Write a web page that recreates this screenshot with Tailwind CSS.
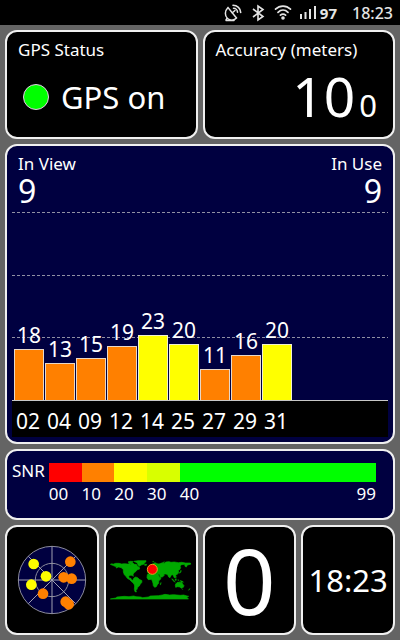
<!DOCTYPE html>
<html lang="en">
<head>
  <meta charset="UTF-8">
  <meta name="viewport" content="width=device-width, initial-scale=1.0">
  <title>GPS Status</title>
  <script src="https://cdn.jsdelivr.net/npm/@tailwindcss/browser@4"></script>
</head>
<body class="flex flex-col min-h-screen bg-[#646464] text-white font-['Noto_Sans',sans-serif]">

<!-- Status bar -->
<header class="flex items-center justify-end gap-[7px] h-[25px] px-[7px] bg-black text-[#e4e4e4]">
    <svg class="size-[18px]" viewBox="0 0 18 18" fill="none" stroke="currentColor" stroke-width="1.5" stroke-linecap="round">
        <path d="M4 3.500C0.500 7 0.700 12 3.500 14.500c2.500 2.300 6.500 2.200 9-.5z"/>
        <path d="M8.300 8.800 11 6.500M3 14.500l-1 1.500M2 16.500h8"/>
        <path d="M9.500 4.300c2.200 0 4 1.800 4 4M9 1.200c4.200 0 7.700 3.200 7.700 7.300" stroke-width="1.600"/>
    </svg>
    <svg class="size-[18px]" viewBox="0 0 18 18" fill="none" stroke="currentColor" stroke-width="1.600">
        <path d="M4 5 14 12.500 9 16V2l5 3.500L4 13"/>
    </svg>
    <svg class="size-[18px]" viewBox="0 0 18 18" fill="none" stroke="currentColor" stroke-width="1.700" stroke-linecap="round">
        <path d="M1.500 5.200C5.800 1 12.200 1 16.500 5.200M4 8.300c3-2.800 7-2.800 10 0M6.400 11.200c1.600-1.400 3.600-1.400 5.200 0"/>
        <circle cx="9" cy="14" r="1.800" fill="currentColor" stroke="none"/>
    </svg>
    <svg class="size-[18px]" viewBox="0 0 18 18" fill="currentColor">
        <path d="M1 10h2v5H1zM5.500 8h2v7h-2zM10 5h2v10h-2zM15 2h2v13h-2z"/>
    </svg>
    <span class="-ml-1 text-[15px] leading-6 font-bold">97</span>
    <time class="ml-2 text-base font-medium">18:23</time>
</header>

<main class="flex flex-col grow gap-[5px] p-[5px]">

    <div class="grid grid-cols-2 gap-[5px] h-[109px]">
        <section class="flex flex-col px-[11px] pt-1.5 rounded-xl border-2 border-[#f0f0f0] bg-black">
            <h2 class="text-[17px] leading-6">GPS Status</h2>
            <p class="flex items-center gap-3 pt-2.5 pl-[5px] text-[31px] leading-[50px]">
                <span class="size-[26px] rounded-full border border-[#e8c8e8] bg-[#00ff00]"></span>
                GPS on
            </p>
        </section>
        <section class="flex flex-col px-[11px] pt-1.5 rounded-xl border-2 border-[#f0f0f0] bg-black">
            <h2 class="text-[17px] leading-6">Accuracy (meters)</h2>
            <p class="flex items-baseline justify-end gap-1 pr-[5px] text-[55px] leading-[68px]">10<span class="text-[31px] leading-none">0</span></p>
        </section>
    </div>

    <!-- Signal of each satellite, 1.5% of the plot height per dB -->
    <section class="flex flex-col grow px-[5px] pb-[5px] rounded-xl border-2 border-[#f0f0f0] bg-[#000040]">
        <div class="flex justify-between h-[66px] px-1.5 pt-1.5">
            <div>
                <h2 class="text-[17px] leading-6">In View</h2>
                <p class="text-[32px] leading-[30px]">9</p>
            </div>
            <div class="text-right">
                <h2 class="text-[17px] leading-6">In Use</h2>
                <p class="text-[32px] leading-[30px]">9</p>
            </div>
        </div>
        <div class="relative grid grid-rows-3 grow border-b border-[#c8c8c8]">
            <div class="h-px bg-[repeating-linear-gradient(90deg,#9090a4_0_3px,transparent_3px_5px)]"></div>
            <div class="h-px bg-[repeating-linear-gradient(90deg,#9090a4_0_3px,transparent_3px_5px)]"></div>
            <div class="h-px bg-[repeating-linear-gradient(90deg,#9090a4_0_3px,transparent_3px_5px)]"></div>
            <div class="absolute inset-0 flex gap-px pl-0.5 text-center text-[21px] leading-7">
                <div class="flex flex-col justify-end w-[30px]">18<div class="border border-b-0 border-[#e8d8c8] bg-[#ff8000]" style="height: 27%"></div></div>
                <div class="flex flex-col justify-end w-[30px]">13<div class="border border-b-0 border-[#e8d8c8] bg-[#ff8000]" style="height: 19.5%"></div></div>
                <div class="flex flex-col justify-end w-[30px]">15<div class="border border-b-0 border-[#e8d8c8] bg-[#ff8000]" style="height: 22.5%"></div></div>
                <div class="flex flex-col justify-end w-[30px]">19<div class="border border-b-0 border-[#e8d8c8] bg-[#ff8000]" style="height: 28.5%"></div></div>
                <div class="flex flex-col justify-end w-[30px]">23<div class="border border-b-0 border-[#f0f0d0] bg-[#ffff00]" style="height: 34.5%"></div></div>
                <div class="flex flex-col justify-end w-[30px]">20<div class="border border-b-0 border-[#f0f0d0] bg-[#ffff00]" style="height: 30%"></div></div>
                <div class="flex flex-col justify-end w-[30px]">11<div class="border border-b-0 border-[#e8d8c8] bg-[#ff8000]" style="height: 16.5%"></div></div>
                <div class="flex flex-col justify-end w-[30px]">16<div class="border border-b-0 border-[#e8d8c8] bg-[#ff8000]" style="height: 24%"></div></div>
                <div class="flex flex-col justify-end w-[30px]">20<div class="border border-b-0 border-[#f0f0d0] bg-[#ffff00]" style="height: 30%"></div></div>
            </div>
        </div>
        <div class="flex gap-px h-9 pl-px bg-black text-center text-[21px] leading-10">
            <span class="w-[30px]">02</span>
            <span class="w-[30px]">04</span>
            <span class="w-[30px]">09</span>
            <span class="w-[30px]">12</span>
            <span class="w-[30px]">14</span>
            <span class="w-[30px]">25</span>
            <span class="w-[30px]">27</span>
            <span class="w-[30px]">29</span>
            <span class="w-[30px]">31</span>
        </div>
    </section>

    <!-- Signal to noise scale -->
    <section class="flex gap-1 h-[71px] pt-3 pl-[5px] pr-[17px] rounded-xl border-2 border-[#f0f0f0] bg-[#000040] text-[17px]">
        <h2 class="leading-[15px]">SNR</h2>
        <div class="grow">
            <div class="grid grid-cols-[1fr_1fr_1fr_1fr_6fr] h-[19px]">
                <div class="bg-[#ff0000]"></div>
                <div class="bg-[#ff8000]"></div>
                <div class="bg-[#ffff00]"></div>
                <div class="bg-[#d8ff00]"></div>
                <div class="bg-[#00ff00]"></div>
            </div>
            <div class="grid grid-cols-[1fr_1fr_1fr_1fr_6fr] leading-6">
                <span>00</span>
                <span>10</span>
                <span>20</span>
                <span>30</span>
                <span class="flex justify-between">40<span>99</span></span>
            </div>
        </div>
    </section>

    <div class="grid grid-cols-4 gap-[5px] h-[110px]">
        <!-- Sky view -->
        <section class="flex items-center justify-center rounded-xl border-2 border-[#f0f0f0] bg-black">
            <svg class="size-[70px]" viewBox="51 76 210 210">
                <circle cx="156" cy="181" r="101" fill="#000040" stroke="#8c8c9c" stroke-width="3"/>
                <circle cx="156" cy="181" r="50" fill="none" stroke="#8c8c9c" stroke-width="3"/>
                <path d="M55 181h202M156 80v202M85 110l142 142M227 110 85 252" stroke="#a0a0b0" stroke-width="3"/>
                <g fill="#ffff00">
                    <circle cx="101" cy="133" r="16"/>
                    <circle cx="138" cy="170" r="16"/>
                    <circle cx="94" cy="195" r="16"/>
                </g>
                <g fill="#ff8000">
                    <circle cx="211" cy="126" r="16"/>
                    <circle cx="191" cy="173" r="16"/>
                    <circle cx="215" cy="177" r="16"/>
                    <circle cx="129" cy="222" r="16"/>
                    <circle cx="197" cy="246" r="16"/>
                    <circle cx="206" cy="254" r="16"/>
                </g>
            </svg>
        </section>
        <!-- World map -->
        <section class="flex items-center justify-center rounded-xl border-2 border-[#f0f0f0] bg-black">
            <svg class="w-[81px] h-10" viewBox="36 121 243 120">
                <g fill="#00aa00" stroke="#00aa00" stroke-width="2">
                    <path d="M37 134l5-2 3 2 8-3 10 0 8 2 8-1 10 1 6-1 4 3 5-4 6 3 5 0 3 5 6 4 1 5-7 2-4 5-6 4-3 6 1 5-4-3-6 0-4 3 2 6 5 0 0 3 4 3 3 4-4 1-7-7-7-4-5-7-4-4-3-8 0-7-6-6-8-2-8 3 2-4-5-1z"/>
                    <path d="M90 127l8-2 8 1-3 3-8 1zM94 131l7-1 6 3-4 3zM108 125l12-2 24 0 0 3-4 3-3 5-8 2-4 4-5-4-2-6-6-3zM140 134l6 0-1 3-5 0z"/>
                    <path d="M108 175l5-3 6 2 5 5 8 4-1 6-4 4-3 6-5 4-2 6-3 3 1 5-4-1-2-7 1-10-2-6-5-5 1-6z"/>
                    <path d="M149 160l0-7 5-2 0-5-2-3 5-5 8-6 6-3 6 3 6 1 8-3 8 1 4-4 10-1 6 2 10-1 12 2 10-1 12 2 14 0 3 3-7 2-5 1-3 6-4-2-1-6-9 1-5 4 2 5-3 6-4 2 1 6-4 6-6 3 1 4-1 4-3-1-3-6-2-3-4 1-4 8-4-2-3-7-5-2-7 0 2 4-6 5-6 0-3-8-7-2-7-1-4-4-8 0z"/>
                    <path d="M148 165l6-5 9-1 3 3 8 0 6 1 4 9 5 2-1 4-6 6 0 7-4 4-3 6-5 2-4-5-1-7-2-7-3-5-9 1-4-6z"/>
                    <path d="M233 193l5-5 5 0 2-2 1 4 4-4 4 7 4 5-2 5-6 3-4-4-7-1-6 2-1-6z"/>
                    <path d="M188 189l2 0-2 6-2 1zM221 177l3 1 5 6 3 4-4-2-5-5zM231 178l4-1 0 5-3 1zM240 179l2 3-2 2zM246 182l8 3 3 3-8-1zM232 166l2 4 2 3-3-1zM242 161l4-4 3-6 1 4-3 5zM274 208l2-2-2 5-3 1zM253 208l1 0 0 2zM151 144l3-2 0 5-3 1zM163 126l5-1-1 2zM193 129l6-3 1 1-4 3z" stroke-width="1"/>
                    <path d="M37 238l16-3 4-3 22-2 14 1 14-2 7 2 14 1 6 2 17-2 6-3 24-1 12-2 8-2 14 2 12-1 20 2 10-1 10 3 5 1-6 3 5 4 0 1H37z"/>
                </g>
                <circle cx="163" cy="149" r="15" fill="#ff0000" stroke="#e8a020" stroke-width="3"/>
            </svg>
        </section>
        <section class="flex items-center justify-center rounded-xl border-2 border-[#f0f0f0] bg-black">
            <p class="text-[92px] leading-none">0</p>
        </section>
        <section class="flex items-center justify-center rounded-xl border-2 border-[#f0f0f0] bg-black">
            <time class="text-[31px]">18:23</time>
        </section>
    </div>

</main>
</body>
</html>
